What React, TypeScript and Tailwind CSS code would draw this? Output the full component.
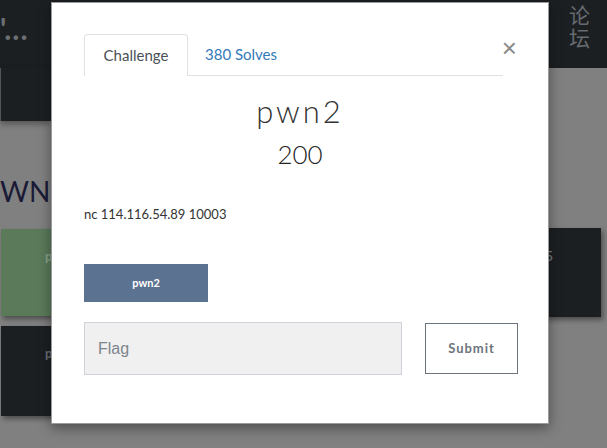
import React from "react";

export default function App() {
  return (
    <div className="relative w-[607px] h-[448px] overflow-hidden bg-[#808080] font-['Lato','Noto_Sans',sans-serif]">
      {/* navbar */}
      <div className="h-[68px] bg-[#1c1f22] flex items-start justify-between">
        <div className="pt-[13px] pl-0 text-[#6b6e72] text-[30px] font-bold leading-none tracking-[1px]">
          '...
        </div>
        <div className="w-[26px] pt-[3px] text-[#666a6e] text-[21px] leading-[23px] font-['Noto_Sans_CJK_SC',sans-serif] mr-[12px]">
          论坛
        </div>
      </div>
      {/* left dropdown block */}
      <div className="w-[51px] h-[53px] bg-[#1c1f22] border-l border-[#555] shadow-[0_3px_6px_rgba(0,0,0,0.35)]" />
      {/* heading */}
      <div className="mt-[52px] text-[#1a1a36] text-[28px] leading-[36px]">WN</div>
      {/* cards */}
      <div className="flex justify-between mt-[20px]">
        <div className="flex flex-col gap-[10px] pl-[1px]">
          <div className="w-[60px] h-[87px] bg-[#5b7a5a] shadow-[2px_3px_5px_rgba(0,0,0,0.4)] text-[#8aa08a] font-bold text-[13px] pt-[18px] pl-[44px]">pwn1</div>
          <div className="w-[60px] h-[90px] bg-[#1c1f22] shadow-[2px_3px_5px_rgba(0,0,0,0.4)] text-[#6b6e72] font-bold text-[13px] pt-[18px] pl-[44px]">pwn3</div>
        </div>
        <div className="w-[60px] h-[89px] bg-[#1c1f22] shadow-[2px_3px_5px_rgba(0,0,0,0.4)] mr-[6px] -mt-[1px] text-[#7d8287] text-[14px] pt-[17px] pl-[4px]">5</div>
      </div>

      {/* modal */}
      <div className="absolute left-[51px] top-[2px] w-[498px] h-[422px] bg-white border border-[#9a9a9a] shadow-[0_4px_12px_rgba(0,0,0,0.4)] pl-[32px] pr-[28px] pt-[31px]">
        <button className="absolute right-[31px] top-[32px] text-[#8a8a8a] text-[26px] leading-none font-['Liberation_Sans',sans-serif]">
          ×
        </button>
        <div className="flex items-end border-b border-[#dee2e6] mr-[17px] h-[42px]">
          <div className="h-[42px] w-[104px] border border-b-0 border-[#dee2e6] rounded-t-[4px] bg-white -mb-px flex items-center justify-center text-[#495057] text-[15px]">
            Challenge
          </div>
          <div className="h-[42px] flex items-center pl-[17px] text-[#337ab7] text-[15px]">380 Solves</div>
        </div>
        <div className="text-center mt-[15px] text-[#333] text-[31px] leading-[40px] font-light tracking-[3px] font-['Lato',sans-serif] pr-[4px]">
          pwn2
        </div>
        <div className="text-center text-[#222] text-[26px] leading-[32px] mt-[7px] font-light pr-[4px]">200</div>
        <div className="mt-[36px] text-[#333] text-[13px] leading-[16px]">nc 114.116.54.89 10003</div>
        <div className="mt-[42px]">
          <div className="w-[124px] h-[38px] bg-[#5b7290] text-white text-[11px] font-bold flex items-center justify-center">
            pwn2
          </div>
        </div>
        <div className="mt-[20px] flex items-center gap-[23px]">
          <div className="shrink-0 w-[318px] h-[53px] bg-[#f0f0f0] border border-[#cfd4da] flex items-center pl-[13px] text-[#7d858c] text-[16px] font-['Liberation_Sans',sans-serif]">
            Flag
          </div>
          <div className="shrink-0 w-[93px] h-[51px] border border-[#6c757d] flex items-center justify-center text-[#6c757d] text-[13px] font-bold tracking-[1px]">
            Submit
          </div>
        </div>
      </div>
    </div>
  );
}
